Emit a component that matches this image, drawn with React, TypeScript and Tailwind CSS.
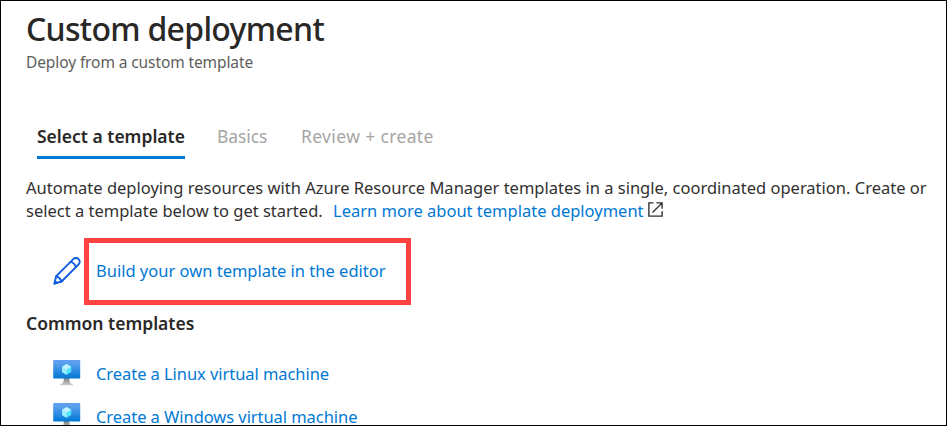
import React from "react";

function PencilIcon() {
  return (
    <svg width="28" height="28" viewBox="0 0 28 28" fill="none" stroke="#0f5be0" strokeWidth="1.9" strokeLinejoin="round" strokeLinecap="round">
      <path d="M1.3 26.7 3.2 19.2 20.3 2.2a3.6 3.6 0 0 1 5.3 0 3.6 3.6 0 0 1 0 5.2L8.6 24.5Z" />
      <path d="M17.6 4.9q3.8 1 5.4 5.2M3.2 19.2q3.8 1.4 5.4 5.3" />
      <path d="M1.3 26.7 2.2 23.4 4.6 25.8Z" fill="#0f5be0" strokeWidth="1" />
    </svg>
  );
}

function ExternalIcon() {
  return (
    <svg className="ml-[4px] mt-[3px]" width="15" height="15" viewBox="0 0 15 15" fill="none" stroke="#323130" strokeWidth="1.4">
      <path d="M5.5.9H.9v13.2h13.2V9.3M8.3.9h5.8v5.9M14 1 4.5 10.5" />
    </svg>
  );
}

function VmIcon() {
  return (
    <svg width="28" height="26" viewBox="0 0 28 26">
      <defs>
        <linearGradient id="screen" x1="0" y1="1" x2="0" y2="0">
          <stop offset="0" stopColor="#0078d4" />
          <stop offset="0.85" stopColor="#5ea0ef" />
        </linearGradient>
        <linearGradient id="stand" x1="0" y1="0" x2="0" y2="1">
          <stop offset="0" stopColor="#7c7c7c" />
          <stop offset="1" stopColor="#d0d0d0" />
        </linearGradient>
      </defs>
      <path d="M10.8 18h5.6c0 3.9.4 5.6 3.6 6.4v.9H7.2v-.9c3.2-.8 3.6-2.5 3.6-6.4Z" fill="url(#stand)" />
      <rect x="0.2" width="27" height="18.4" rx="0.7" fill="url(#screen)" />
      <path d="m13.6 4.1 4.6 2.7v5.3l-4.6 2.7L9 12.1V6.8Z" fill="#50e6ff" />
      <path d="m13.6 4.1 4.6 2.7-4.6 2.7L9 6.8Z" fill="#c3f1ff" />
      <path d="M9 6.8l4.6 2.7v5.3L9 12.1Z" fill="#9cebff" />
    </svg>
  );
}

const templates = ["Create a Linux virtual machine", "Create a Windows virtual machine"];

export default function App() {
  return (
    <main className="h-[426px] w-[947px] overflow-hidden border border-black bg-white pl-[25px] pt-[8px] font-['Noto_Sans',sans-serif] text-[16.5px] text-[#323130]">
      <h1 className="h-10 whitespace-nowrap text-[32px] font-medium leading-10 tracking-[-0.7px] text-[#292827]"><span>Custom deployment</span></h1>
      <p className="mt-[3px] h-5 whitespace-nowrap text-[15.5px] leading-5 tracking-[-0.1px] text-[#605e5c]"><span>Deploy from a custom template</span></p>
      <nav className="ml-[11px] mt-[52px] flex h-[35px] gap-8 whitespace-nowrap text-[17.5px] leading-6 text-[#a6a5a4]">
        <div className="w-[148px] border-b-[3px] border-[#0078d4] font-semibold text-[#292827]"><span>Select a template</span></div>
        <div className="w-[52px]"><span className="tracking-[-0.1px]">Basics</span></div>
        <div><span className="tracking-[0.36px]">Review + create</span></div>
      </nav>
      <div className="mt-[17px] whitespace-nowrap leading-[23px]">
        <p><span>Automate deploying resources with Azure Resource Manager templates in a single, coordinated operation. Create or</span></p>
        <p className="flex">
          <span className="w-[307px]">select a template below to get started.</span>
          <a className="text-[#0078d4]">Learn more about template deployment</a>
          <ExternalIcon />
        </p>
      </div>
      <div className="mt-[16px] flex h-[67px] items-center">
        <div className="ml-[27px] w-[31px] pb-[2px]"><PencilIcon /></div>
        <div className="flex h-[67px] w-[327px] items-center whitespace-nowrap border-[5px] border-[#ff4343] pb-[2px] pl-[7px] leading-6 text-[#0078d4]"><a>Build your own template in the editor</a></div>
      </div>
      <h2 className="mt-[6px] whitespace-nowrap text-[17.5px] font-semibold leading-6 text-[#292827]"><span>Common templates</span></h2>
      <ul className="mt-[17px] whitespace-nowrap text-[#0078d4]">
        {templates.map((label) => (
          <li key={label} className="flex h-[43px] items-center pl-[27px] leading-6">
            <div className="mr-[15px] w-7 pb-[2px]"><VmIcon /></div>
            <a className="tracking-[-0.06px]">{label}</a>
          </li>
        ))}
      </ul>
    </main>
  );
}
